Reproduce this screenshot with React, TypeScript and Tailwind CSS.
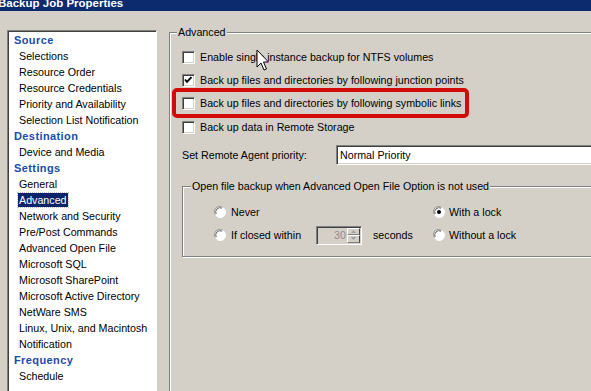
import React from "react";

const FONT = { fontFamily: '"Liberation Sans", Arial, sans-serif' };

type Row = { t: string; h?: boolean; sel?: boolean };

const rows: Row[] = [
  { t: "Source", h: true },
  { t: "Selections" },
  { t: "Resource Order" },
  { t: "Resource Credentials" },
  { t: "Priority and Availability" },
  { t: "Selection List Notification" },
  { t: "Destination", h: true },
  { t: "Device and Media" },
  { t: "Settings", h: true },
  { t: "General" },
  { t: "Advanced", sel: true },
  { t: "Network and Security" },
  { t: "Pre/Post Commands" },
  { t: "Advanced Open File" },
  { t: "Microsoft SQL" },
  { t: "Microsoft SharePoint" },
  { t: "Microsoft Active Directory" },
  { t: "NetWare SMS" },
  { t: "Linux, Unix, and Macintosh" },
  { t: "Notification" },
  { t: "Frequency", h: true },
  { t: "Schedule" },
];

function Checkbox({ checked }: { checked?: boolean }) {
  return (
    <div className="w-[13px] h-[13px] shrink-0 bg-white border border-t-[#808080] border-l-[#808080] border-r-white border-b-white shadow-[inset_1px_1px_0_#404040,inset_-1px_-1px_0_#d4d0c8] flex items-center justify-center">
      {checked && (
        <svg width="11" height="11" viewBox="0 0 11 11">
          <path d="M2 4.5 L4 6.8 L8.5 2.2" stroke="#000" strokeWidth="1.9" fill="none" />
        </svg>
      )}
    </div>
  );
}

function Radio({ checked }: { checked?: boolean }) {
  return (
    <svg width="12" height="12" viewBox="0 0 12 12" className="shrink-0">
      <circle cx="6" cy="6" r="5.5" fill="#fff" />
      <path d="M1.2 8.5 A5.3 5.3 0 0 1 8.5 1.2" stroke="#9a9890" strokeWidth="1" fill="none" />
      <path d="M2.2 8 A4.3 4.3 0 0 1 8 2.2" stroke="#606060" strokeWidth="1" fill="none" />
      <path d="M3.5 10.8 A5.3 5.3 0 0 0 10.8 3.5" stroke="#ffffff" strokeWidth="1" fill="none" />
      {checked && <circle cx="6" cy="6" r="2" fill="#000" />}
    </svg>
  );
}

function Cursor() {
  return (
    <svg width="14" height="23" viewBox="0 0 14 23" className="absolute left-[256px] top-[49px]">
      <path d="M1 1 L1 18 L5 14 L8 21 L10.5 20 L7.5 13 L12.5 13 Z" fill="#fff" stroke="#000" strokeWidth="1" strokeLinejoin="miter" />
    </svg>
  );
}

export default function App() {
  return (
    <div className="relative w-[591px] h-[391px] overflow-hidden bg-[#d4d0c8] text-[10.7px] text-black" style={FONT}>
      {/* title bar */}
      <div className="h-[11px] bg-[#0c2a6e] overflow-hidden">
        <div className="-mt-[3px] -ml-[2px] text-white font-bold text-[11.5px] leading-[12px] whitespace-nowrap">
          Backup Job Properties
        </div>
      </div>

      <div className="flex pt-[19px]">
        {/* left tree list */}
        <div className="ml-[7px] w-[150px] h-[370px] shrink-0 bg-white border border-t-[#808080] border-l-[#808080] border-r-white border-b-white shadow-[inset_1px_1px_0_#404040]">
          <div className="pt-[1px] pl-[1px]">
            {rows.map((r) =>
              r.h ? (
                <div key={r.t} className="h-[16px] leading-[16px] pl-[5px] font-bold text-[11px] tracking-[0.4px] text-[#1a4ca8] whitespace-nowrap">
                  {r.t}
                </div>
              ) : (
                <div key={r.t} className="h-[16px] leading-[16px] pl-[9px] whitespace-nowrap flex items-center">
                  <span
                    className={
                      r.sel
                        ? "px-[1px] leading-[14px] bg-[#0a246a] text-white outline outline-1 outline-dotted outline-[#c0c0c0]"
                        : "px-[1px] leading-[14px]"
                    }
                  >
                    {r.t}
                  </span>
                </div>
              )
            )}
          </div>
        </div>

        {/* right panel */}
        <div className="ml-[12px] pt-[2px] flex-1 min-w-0">
          <div className="relative w-[440px] h-[400px] border border-[#808080] shadow-[inset_1px_1px_0_#fff,1px_1px_0_#fff]">
            <div className="absolute left-[7px] -top-[7px] px-[1px] bg-[#d4d0c8] leading-[12px]">Advanced</div>

            <div className="pl-[12px] flex flex-col">
              <div className="mt-[16px] h-[16px] flex items-center gap-[5px] whitespace-nowrap">
                <Checkbox />
                <span>Enable single instance backup for NTFS volumes</span>
              </div>
              <div className="mt-[7px] h-[16px] flex items-center gap-[5px] whitespace-nowrap">
                <Checkbox checked />
                <span>Back up files and directories by following junction points</span>
              </div>
              <div className="mt-[7px] h-[16px] flex items-center gap-[5px] whitespace-nowrap">
                <Checkbox />
                <span>Back up files and directories by following symbolic links</span>
              </div>
              <div className="mt-[8px] h-[16px] flex items-center gap-[5px] whitespace-nowrap">
                <Checkbox />
                <span>Back up data in Remote Storage</span>
              </div>

              <div className="mt-[10px] h-[20px] flex items-center whitespace-nowrap">
                <span className="w-[154px] shrink-0">Set Remote Agent priority:</span>
                <div className="w-[300px] h-[20px] shrink-0 bg-white border border-t-[#808080] border-l-[#808080] border-r-white border-b-white shadow-[inset_1px_1px_0_#404040,inset_-1px_-1px_0_#d4d0c8] pl-[3px] leading-[18px]">
                  Normal Priority
                </div>
              </div>

              <div className="relative mt-[21px] w-[420px] h-[71px] border border-[#808080] shadow-[inset_1px_1px_0_#fff,1px_1px_0_#fff]">
                <div className="absolute left-[8px] -top-[7px] px-[1px] bg-[#d4d0c8] leading-[12px] whitespace-nowrap">
                  Open file backup when Advanced Open File Option is not used
                </div>
                <div className="pl-[31px] flex flex-col">
                  <div className="mt-[17px] h-[16px] flex items-center whitespace-nowrap">
                    <div className="w-[219px] flex items-center gap-[5px]">
                      <Radio />
                      <span>Never</span>
                    </div>
                    <div className="flex items-center gap-[4px]">
                      <Radio checked />
                      <span>With a lock</span>
                    </div>
                  </div>
                  <div className="mt-[5px] h-[20px] flex items-center whitespace-nowrap">
                    <div className="w-[219px] flex items-center">
                      <Radio />
                      <span className="ml-[5px] w-[85px]">If closed within</span>
                      <div className="w-[46px] h-[19px] flex border border-t-[#808080] border-l-[#808080] border-r-white border-b-white shadow-[inset_1px_1px_0_#404040,inset_-1px_-1px_0_#d4d0c8] bg-[#d4d0c8]">
                        <div className="flex-1 text-right pr-[1px] pt-[1px] text-[#8c8c8c] leading-[15px]">30</div>
                        <div className="w-[14px] flex flex-col py-[1px] pr-[1px]">
                          <div className="flex-1 flex items-center justify-center border border-t-white border-l-white border-r-[#404040] border-b-[#808080]">
                            <svg width="5" height="3" viewBox="0 0 5 3"><path d="M2.5 0 L5 3 L0 3 Z" fill="#a0a0a0" /></svg>
                          </div>
                          <div className="flex-1 flex items-center justify-center border border-t-white border-l-white border-r-[#404040] border-b-[#808080]">
                            <svg width="5" height="3" viewBox="0 0 5 3"><path d="M0 0 L5 0 L2.5 3 Z" fill="#a0a0a0" /></svg>
                          </div>
                        </div>
                      </div>
                      <span className="ml-[11px]">seconds</span>
                    </div>
                    <div className="flex items-center gap-[4px]">
                      <Radio />
                      <span>Without a lock</span>
                    </div>
                  </div>
                </div>
              </div>
            </div>
          </div>
        </div>
      </div>

      {/* red highlight */}
      <div className="absolute left-[172px] top-[88px] w-[297px] h-[30px] border-[4px] border-[#d20a0a] rounded-[5px] pointer-events-none" />
      <Cursor />
    </div>
  );
}
